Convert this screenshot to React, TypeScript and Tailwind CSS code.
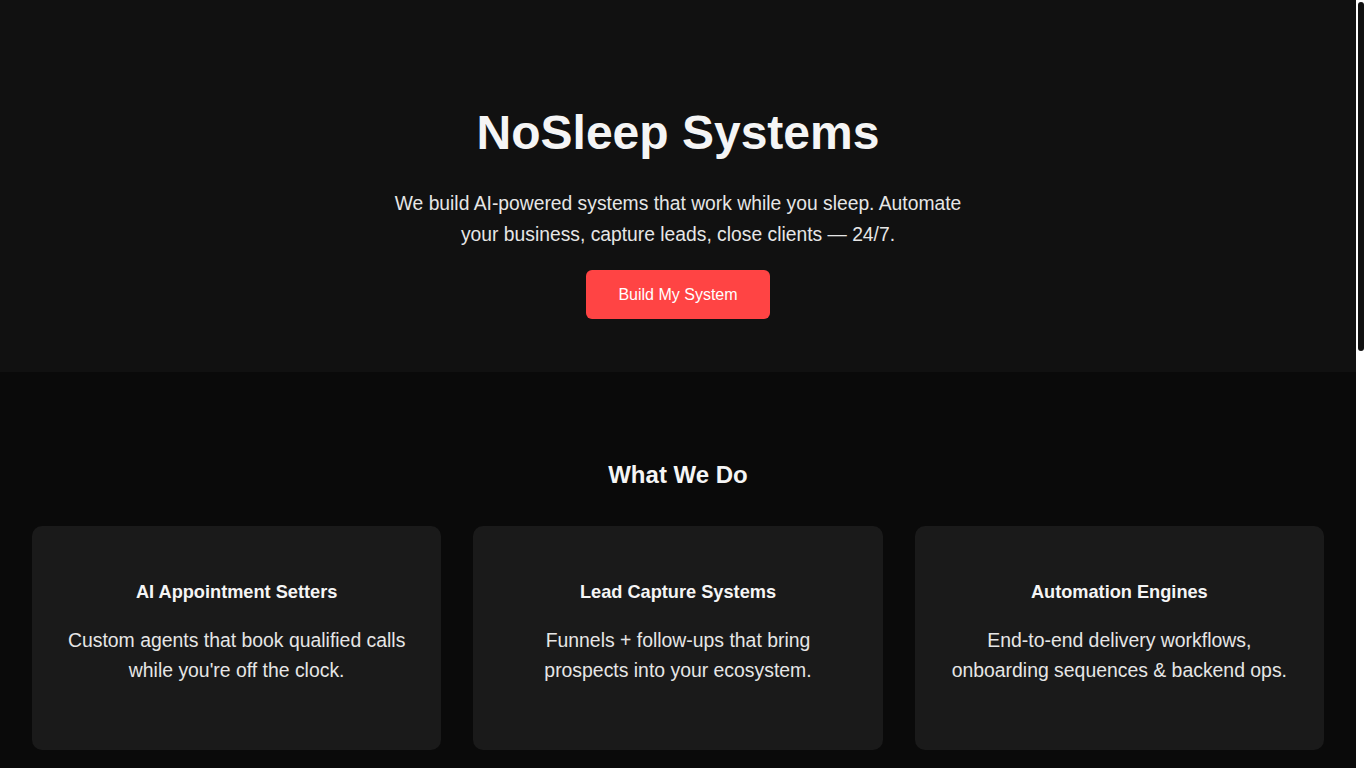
const services = [
  {
    title: "AI Appointment Setters",
    body: "Custom agents that book qualified calls while you're off the clock.",
  },
  {
    title: "Lead Capture Systems",
    body: "Funnels + follow-ups that bring prospects into your ecosystem.",
  },
  {
    title: "Automation Engines",
    body: "End-to-end delivery workflows, onboarding sequences & backend ops.",
  },
];

const steps = [
  { title: "1. Audit", body: "We map how your business runs today and find the hours you lose." },
  { title: "2. Build", body: "We design and ship the agents, funnels and automations you need." },
  { title: "3. Run", body: "Your system works around the clock while we monitor and improve it." },
];

const Card = ({ title, body }: { title: string; body: string }) => (
  <div className="bg-[#1a1a1a] rounded-[10px] h-[224px] pt-[55px] px-8 text-center">
    <h3 className="text-[18.2px] leading-[22px] font-bold">{title}</h3>
    <p className="mt-[22px] text-[19.4px] leading-[30px] text-[#e6e6e6]">{body}</p>
  </div>
);

const App = () => {
  return (
    <div className="min-h-screen flex items-start bg-[#0a0a0a] text-[#f5f5f5] font-['Liberation_Sans',Arial,sans-serif]">
      <main className="flex-1 min-w-0">
        {/* Hero */}
        <section className="bg-[#111111] pt-[105px] pb-[53px] px-8 flex flex-col items-center text-center">
          <h1 className="text-[48px] leading-[56px] font-bold text-[#f5f5f5]">NoSleep Systems</h1>
          <p className="mt-[27px] max-w-[600px] text-[19.3px] leading-[31px] text-[#e6e6e6]">
            We build AI-powered systems that work while you sleep. Automate your business, capture leads, close
            clients — 24/7.
          </p>
          <button className="mt-[20px] h-[49px] px-8 rounded-md bg-[#ff4444] text-white text-[16px]">
            Build My System
          </button>
        </section>

        {/* What We Do */}
        <section className="pt-[89px] pb-[80px] px-8">
          <h2 className="text-center text-[24px] leading-[28px] font-bold">What We Do</h2>
          <div className="mt-[37px] grid grid-cols-3 gap-8">
            {services.map((s) => (
              <Card key={s.title} {...s} />
            ))}
          </div>
        </section>

        {/* How It Works */}
        <section className="bg-[#111111] py-[89px] px-8">
          <h2 className="text-center text-[24px] leading-[28px] font-bold">How It Works</h2>
          <div className="mt-[37px] grid grid-cols-3 gap-8">
            {steps.map((s) => (
              <Card key={s.title} {...s} />
            ))}
          </div>
        </section>

        {/* Contact */}
        <section className="py-[100px] px-8 flex flex-col items-center text-center">
          <h2 className="text-[24px] leading-[28px] font-bold">Ready to stop working nights?</h2>
          <p className="mt-[20px] max-w-[600px] text-[19.3px] leading-[31px] text-[#e6e6e6]">
            Book a free strategy call and we'll show you what can run on autopilot.
          </p>
          <button className="mt-[24px] h-[49px] px-8 rounded-md bg-[#ff4444] text-white text-[16px]">
            Book a Call
          </button>
        </section>

        <footer className="bg-[#111111] py-[40px] text-center text-[14px] text-[#888]">
          © 2025 NoSleep Systems. All rights reserved.
        </footer>
      </main>

      {/* scroll rail */}
      <aside className="sticky top-0 h-screen w-[10px] shrink-0 bg-white">
        <div className="mt-[2px] ml-[2px] w-[6px] h-[349px] rounded-full bg-[#111]" />
      </aside>
    </div>
  );
};

export default App;
